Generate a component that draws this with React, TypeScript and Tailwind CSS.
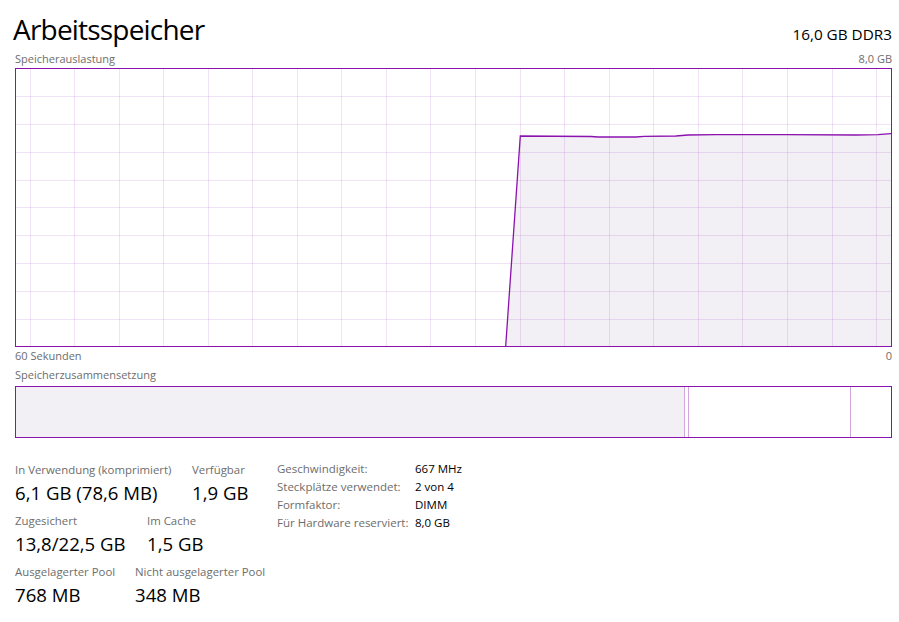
import React from 'react';

// Memory page of the performance view: usage graph, composition bar and stats
const PURPLE = '#8b12ae';

const gridX = [30, 74, 119, 163, 208, 252, 297, 341, 386, 430, 475, 520, 564, 609, 653, 698, 742, 787, 832, 876];
const gridY = [96, 124, 152, 180, 207, 235, 263, 291, 319];

// usage samples in graph-local pixels (origin = inner top-left of the frame)
const usage: [number, number][] = [
  [489.7, 277],
  [504.3, 67],
  [575, 67.5],
  [582, 68],
  [620, 68],
  [628, 67.3],
  [660, 67],
  [672, 66],
  [700, 65.6],
  [770, 65.6],
  [840, 66],
  [862, 65.6],
  [875, 64.6],
];

function UsageGraph() {
  const w = 875;
  const h = 277;
  const line = usage.map(([x, y]) => `${x},${y}`).join(' ');
  const area = `${line} ${w},${h}`;
  return (
    <div className="border border-[#8b12ae] h-[279px] w-[877px]">
      <svg width={w} height={h} className="block">
        <polygon points={area} fill="#f2f0f4" />
        {gridX.map((x) => (
          <line key={x} x1={x - 16 + 0.5} x2={x - 16 + 0.5} y1={0} y2={h} stroke="rgba(139,18,174,0.12)" strokeWidth={1} />
        ))}
        {gridY.map((y) => (
          <line key={y} x1={0} x2={w} y1={y - 69 + 0.5} y2={y - 69 + 0.5} stroke="rgba(139,18,174,0.12)" strokeWidth={1} />
        ))}
        <polyline points={line} fill="none" stroke={PURPLE} strokeWidth={1.3} />
      </svg>
    </div>
  );
}

function CompositionBar() {
  return (
    <div className="flex border border-[#8b12ae] h-[52px] w-[877px]">
      <div className="w-[668px] bg-[#f2f0f4]" />
      <div className="w-[5px] border-x border-[#d3a6dd]" />
      <div className="w-[161px]" />
      <div className="flex-1 border-l border-[#d3a6dd]" />
    </div>
  );
}

function Stat({ label, value, width }: { label: string; value: string; width?: string }) {
  return (
    <div className={width}>
      <div className="text-[11.4px] leading-[16px] text-[#6d6d6d] whitespace-nowrap">{label}</div>
      <div className="mt-[1px] text-[18.6px] leading-[28px] text-black whitespace-nowrap">{value}</div>
    </div>
  );
}

const details: [string, string][] = [
  ['Geschwindigkeit:', '667 MHz'],
  ['Steckplätze verwendet:', '2 von 4'],
  ['Formfaktor:', 'DIMM'],
  ['Für Hardware reserviert:', '8,0 GB'],
];

export default function App() {
  return (
    <div className="w-[899px] h-[622px] bg-white overflow-hidden pl-[15px] font-['Open_Sans','Noto_Sans',sans-serif]">
      <div className="flex items-baseline justify-between w-[877px] pt-[11px]">
        <h1 className="-ml-[2px] text-[28px] leading-[36px] tracking-[-0.8px] font-normal text-black">Arbeitsspeicher</h1>
        <span className="text-[15.3px] text-black">16,0 GB DDR3</span>
      </div>

      <div className="flex justify-between w-[877px] mt-[5px] text-[11px] leading-[14px] text-[#6d6d6d]">
        <span>Speicherauslastung</span>
        <span>8,0 GB</span>
      </div>
      <div className="mt-[2px]">
        <UsageGraph />
      </div>
      <div className="flex justify-between w-[877px] mt-[2px] text-[11px] leading-[14px] text-[#6d6d6d]">
        <span>60 Sekunden</span>
        <span>0</span>
      </div>
      <div className="mt-[5px] text-[11px] leading-[14px] text-[#6d6d6d]">Speicherzusammensetzung</div>
      <div className="mt-[4px]">
        <CompositionBar />
      </div>

      <div className="flex items-start mt-[24px]">
        <div className="w-[262px] flex flex-col gap-[6px]">
          <div className="flex">
            <Stat width="w-[177px]" label="In Verwendung (komprimiert)" value="6,1 GB (78,6 MB)" />
            <Stat label="Verfügbar" value="1,9 GB" />
          </div>
          <div className="flex">
            <Stat width="w-[132px]" label="Zugesichert" value="13,8/22,5 GB" />
            <Stat label="Im Cache" value="1,5 GB" />
          </div>
          <div className="flex">
            <Stat width="w-[120px]" label="Ausgelagerter Pool" value="768 MB" />
            <Stat label="Nicht ausgelagerter Pool" value="348 MB" />
          </div>
        </div>
        <div className="grid grid-cols-[138px_auto] content-start text-[11.5px] leading-[18px] -mt-[2px]">
          {details.map(([k, v]) => (
            <React.Fragment key={k}>
              <span className="text-[#6d6d6d] whitespace-nowrap">{k}</span>
              <span className="text-black">{v}</span>
            </React.Fragment>
          ))}
        </div>
      </div>
    </div>
  );
}
